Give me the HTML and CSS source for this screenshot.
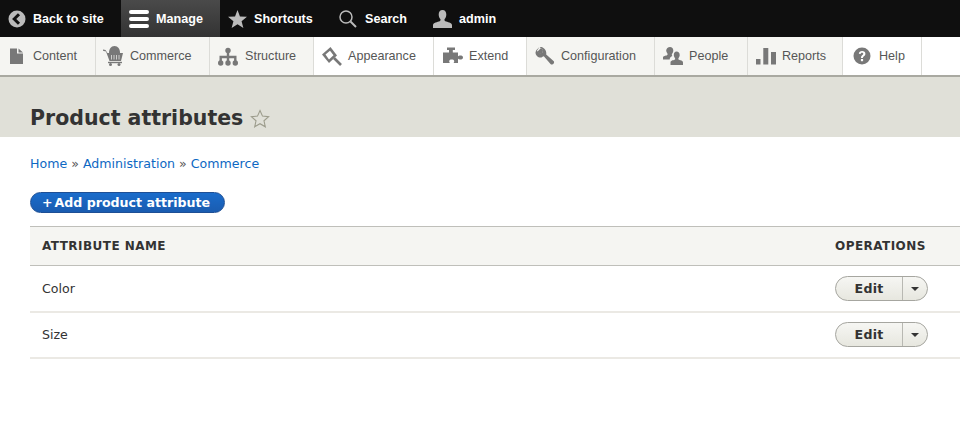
FILE: index.html
```html
<!DOCTYPE html>
<html lang="en">
<head>
<meta charset="utf-8">
<title>Product attributes</title>
<link rel="stylesheet" href="styles.css">
</head>
<body>
<nav class="toolbar">
  <a class="bar-item back"><svg class="bar-icon" viewBox="0 0 18 18"><circle cx="9" cy="9" r="8.5" fill="#bbb"/><path d="M11 4.2 6.2 9l4.8 4.8" fill="none" stroke="#111" stroke-width="3"/></svg>Back to site</a>
  <a class="bar-item manage"><svg class="bar-icon burger" viewBox="0 0 20 20"><path d="M2 1h16a2 2 0 0 1 0 4H2a2 2 0 0 1 0-4zM2 8h16a2 2 0 0 1 0 4H2a2 2 0 0 1 0-4zM2 15h16a2 2 0 0 1 0 4H2a2 2 0 0 1 0-4z" fill="#fff"/></svg>Manage</a>
  <a class="bar-item shortcuts"><svg class="bar-icon star" viewBox="0 0 20 19"><path d="M10 0l2.600 6.800 7.400.4-5.700 4.600 1.900 7.200-6.200-4-6.200 4 1.900-7.200L0 7.200l7.400-.4z" fill="#bbb"/></svg>Shortcuts</a>
  <a class="bar-item search"><svg class="bar-icon" viewBox="0 0 18 18"><circle cx="7" cy="7" r="6" fill="none" stroke="#bbb" stroke-width="1.500"/><path d="M11.500 11.500 17 17" stroke="#bbb" stroke-width="2"/></svg>Search</a>
  <a class="bar-item user"><svg class="bar-icon" viewBox="0 0 19 18"><path d="M9.500 0c2.500 0 3.800 2 3.800 4.500 0 2-.8 3.500-1.600 4.500-.5.700-.2 1.800.6 2.200 2 .8 6.700 1.300 6.700 3.800v3H0v-3c0-2.500 4.700-3 6.700-3.800.8-.4 1.100-1.500.6-2.200C6.500 8 5.700 6.500 5.700 4.500 5.700 2 7 0 9.500 0z" fill="#bbb"/></svg>admin</a>
</nav>
<nav class="tray">
  <a class="tray-item content"><svg class="tray-icon" viewBox="0 0 20 20"><path d="M2 2.500h7v5h6V18H2zM10.500 2.500 15 6.500h-4.500z" fill="#787878"/></svg>Content</a>
  <a class="tray-item commerce"><svg class="tray-icon" viewBox="0 0 20 20"><path d="M0 3.500l2.500.5L4.500 7H20l-2 8H6.500L3 5.500 0 4.700z" fill="#787878"/><path d="M6 7c0-4 2-7 5.500-7S17 3 17 7z" fill="#787878"/><path d="M8.500 9v4.500M11 9v4.500M13.500 9v4.500M16 9v4.500" stroke="#f5f5f2" stroke-width=".7"/><rect x="5" y="15.800" width="14" height="1.400" fill="#787878"/><circle cx="7.500" cy="18.500" r="1.500" fill="#787878"/><circle cx="16" cy="18.500" r="1.500" fill="#787878"/></svg>Commerce</a>
  <a class="tray-item structure"><svg class="tray-icon" viewBox="0 0 20 20"><circle cx="10" cy="4.500" r="2.700" fill="#787878"/><circle cx="2.700" cy="17" r="2.700" fill="#787878"/><circle cx="10" cy="17" r="2.700" fill="#787878"/><circle cx="17.300" cy="17" r="2.700" fill="#787878"/><path d="M10 4.500V17M2.700 17v-6h14.600v6" fill="none" stroke="#787878" stroke-width="2.400"/></svg>Structure</a>
  <a class="tray-item appearance light"><svg class="tray-icon" viewBox="0 0 20 20"><path d="M0 8.500 8.500 1 15 9.500 7 17z" fill="#787878"/><path d="M3.500 8.500 8 4.700l3.500 4.600L7 13.500z" fill="#fff"/><path d="M12 12l7 7" stroke="#787878" stroke-width="2.600"/></svg>Appearance</a>
  <a class="tray-item extend light"><svg class="tray-icon" viewBox="0 0 20 20"><path d="M4 1.500h8v2.500H9.800v2.500H15v4c1-1.500 5-1.500 5 1s-4 2.500-5 1V17h-4.500c1.300-1.300 1-3.500-1.800-3.500S5.700 15.700 7 17H0V6.500h6V4H4z" fill="#787878"/></svg>Extend</a>
  <a class="tray-item config"><svg class="tray-icon" viewBox="0 0 20 20"><path d="M4.500 1 1.200 4.300 .5 6.500c0 3 2.800 5.500 6 5l1-.8 1.300-.4 6.700 7.700c1.500 1.800 4.500-.8 3.300-2.700L11.200 8.500c.8-3.500-1.700-7-5.200-7.500h-1L7.800 4l-.3 2.800-2.800.6L1.800 5z" fill="#787878"/><path d="M7 1h-2l3 3-.5 3.200-3 .7-3-3L1 7" fill="#787878"/></svg>Configuration</a>
  <a class="tray-item people"><svg class="tray-icon" viewBox="0 0 20 20"><path d="M7 1c2 0 3.300 1.500 3.300 3.500 0 1.500-.7 2.600-1.300 3.500-.4.700-.1 1.500.4 2-1.500.5-2.700 1.700-2.700 3.500H0v-2C0 10 2.800 10 4 9.300c.6-.4.800-1 .4-1.700-.6-.9-1.200-1.800-1.200-3C3.200 2.500 5 1 7 1z" fill="#787878"/><path d="M13.500 5.500c2 0 3.200 1.500 3.200 3.500 0 1.300-.7 2.400-1.200 3.200-.4.700-.1 1.300.5 1.600 1.300.5 4 .9 4 2.700V19H7.500v-2.500c0-1.800 2.700-2.200 4-2.700.6-.3.900-.9.500-1.600-.5-.8-1.200-1.900-1.200-3.200 0-2 1-3.500 2.700-3.500z" fill="#787878"/></svg>People</a>
  <a class="tray-item reports"><svg class="tray-icon" viewBox="0 0 20 20"><path d="M0 13h4.500v5.500H0zM7.300 2h5v16.500h-5zM15 6h5v12.500h-5z" fill="#787878"/></svg>Reports</a>
  <a class="tray-item help light"><svg class="tray-icon help-icon" viewBox="0 0 18 18"><circle cx="9" cy="9" r="8.500" fill="#787878"/><path d="M5.800 6.800C6 4.800 7.300 4 9.100 4c2 0 3.300 1.100 3.300 2.700 0 2.500-2.500 2.300-2.500 4.300H8c0-3 2.300-2.800 2.300-4.200 0-.7-.5-1.100-1.300-1.100-.8 0-1.300.5-1.400 1.200z" fill="#fff"/><rect x="7.900" y="12" width="2.200" height="2.200" fill="#fff"/></svg>Help</a>
</nav>
<header class="page-head">
  <h1 class="page-title">Product attributes</h1>
  <svg class="fav" viewBox="0 0 20 20"><path d="M10 1.500l2.500 5.600 6.100.6-4.600 4.100 1.300 6-5.300-3.100-5.300 3.100 1.300-6-4.600-4.100 6.100-.6z" fill="none" stroke="#9c9c8c" stroke-width="1.100"/></svg>
</header>
<main class="main">
  <div class="crumbs"><a>Home</a> » <a>Administration</a> » <a>Commerce</a></div>
  <a class="add-btn"><span class="plus">+</span>Add product attribute</a>
  <table class="list">
    <thead><tr><th>ATTRIBUTE NAME</th><th class="ops">OPERATIONS</th></tr></thead>
    <tbody>
      <tr><td>Color</td><td class="ops"><span class="drop"><span class="edit">Edit</span><span class="tog"><i class="arrow"></i></span></span></td></tr>
      <tr><td>Size</td><td class="ops"><span class="drop"><span class="edit">Edit</span><span class="tog"><i class="arrow"></i></span></span></td></tr>
    </tbody>
  </table>
</main>
</body>
</html>
```
FILE: styles.css
```css
* { box-sizing: border-box; }
html, body { margin: 0; padding: 0; height: 443px; overflow: hidden; background: #fff; }
body { font-family: "DejaVu Sans", sans-serif; font-size: 12.6px; color: #333; }

.toolbar { display: flex; height: 37px; background: #0f0f0f; font: bold 12.6px "Liberation Sans", sans-serif; color: #fff; }
.bar-item { display: flex; align-items: center; height: 37px; white-space: nowrap; }
.bar-icon { width: 18px; height: 18px; margin-right: 8px; flex: none; }
.back { width: 121px; padding-left: 8px; }
.back .bar-icon { margin-right: 7px; }
.manage { width: 99px; padding-left: 8px; background: linear-gradient(to bottom, #4a4a4a, #333); }
.burger { width: 20px; height: 20px; margin-right: 7px; }
.shortcuts { width: 119px; padding-left: 8px; }
.star { width: 19px; margin-right: 7px; }
.search { width: 94px; }
.user .bar-icon { width: 19px; margin-right: 7px; }

.tray { display: flex; height: 40px; background: #fff; border-bottom: 2px solid #a9a9a1; font: 12.6px "Liberation Sans", sans-serif; color: #565656; }
.tray-item { display: flex; align-items: center; height: 38px; background: #f5f5f2; border-right: 1px solid #dcdcd8; white-space: nowrap; }
.tray-item.light { background: #fff; }
.tray-icon { width: 20px; height: 20px; margin-right: 6px; flex: none; }
.content { width: 96px; padding-left: 8px; }
.content .tray-icon { margin-right: 5px; }
.commerce { width: 114px; padding-left: 7px; }
.commerce .tray-icon { margin-right: 7px; }
.structure { width: 104px; padding-left: 8px; }
.structure .tray-icon { margin-right: 7px; }
.appearance { width: 120px; padding-left: 8px; }
.extend { width: 93px; padding-left: 9px; }
.config { width: 128px; padding-left: 8px; }
.people { width: 93px; padding-left: 8px; }
.reports { width: 95px; padding-left: 8px; }
.help { width: 79px; padding-left: 10px; }
.help-icon { width: 18px; height: 18px; margin-right: 8px; }

.page-head { display: flex; align-items: center; height: 60px; padding: 22px 0 0 30px; background: #e0e0d8; }
.page-title { margin: 0; font: bold 20.5px "DejaVu Sans", sans-serif; color: #333; line-height: 38px; }
.fav { width: 20px; height: 20px; margin-left: 7px; margin-top: 2px; }

.main { padding: 0 0 0 30px; }
.crumbs { margin-top: 19px; height: 16px; line-height: 16px; color: #555; }
.crumbs a { color: #0d68c3; }

.add-btn { display: inline-flex; align-items: center; height: 21px; margin-top: 20px; padding: 0 14px 0 11px; border: 1px solid #1e4f95; border-radius: 11px; background: linear-gradient(to bottom, #1a6ccb, #1a5cb0); color: #fff; font: bold 12.6px "DejaVu Sans", sans-serif; vertical-align: top; }
.plus { margin-right: 2px; }

.list { display: table; width: 930px; margin-top: 13px; border-collapse: collapse; }
.list th { height: 39px; padding: 0 0 0 12px; background: #f5f5f2; border-top: 1px solid #bfbfba; border-bottom: 1px solid #bfbfba; text-align: left; font-weight: bold; font-size: 12px; letter-spacing: 0.45px; color: #333; }
.list td { height: 46px; padding: 0 0 0 12px; border-bottom: 2px solid #ebe9e4; color: #333; }
.list .ops { width: 125px; padding-left: 0; }

.drop { display: inline-flex; height: 25px; width: 93px; border: 1px solid #a6a6a0; border-radius: 13px; background: linear-gradient(to bottom, #f6f6f3, #e7e7df); vertical-align: middle; }
.edit { flex: 1; text-align: center; line-height: 23px; font-weight: bold; font-size: 12.6px; letter-spacing: 0.2px; color: #333; }
.tog { position: relative; width: 25px; border-left: 1px solid #b8b8b2; }
.arrow { position: absolute; left: 8px; top: 10px; width: 0; height: 0; border-style: solid; border-width: 4px 4px 0; border-color: #333 transparent transparent; }
```
